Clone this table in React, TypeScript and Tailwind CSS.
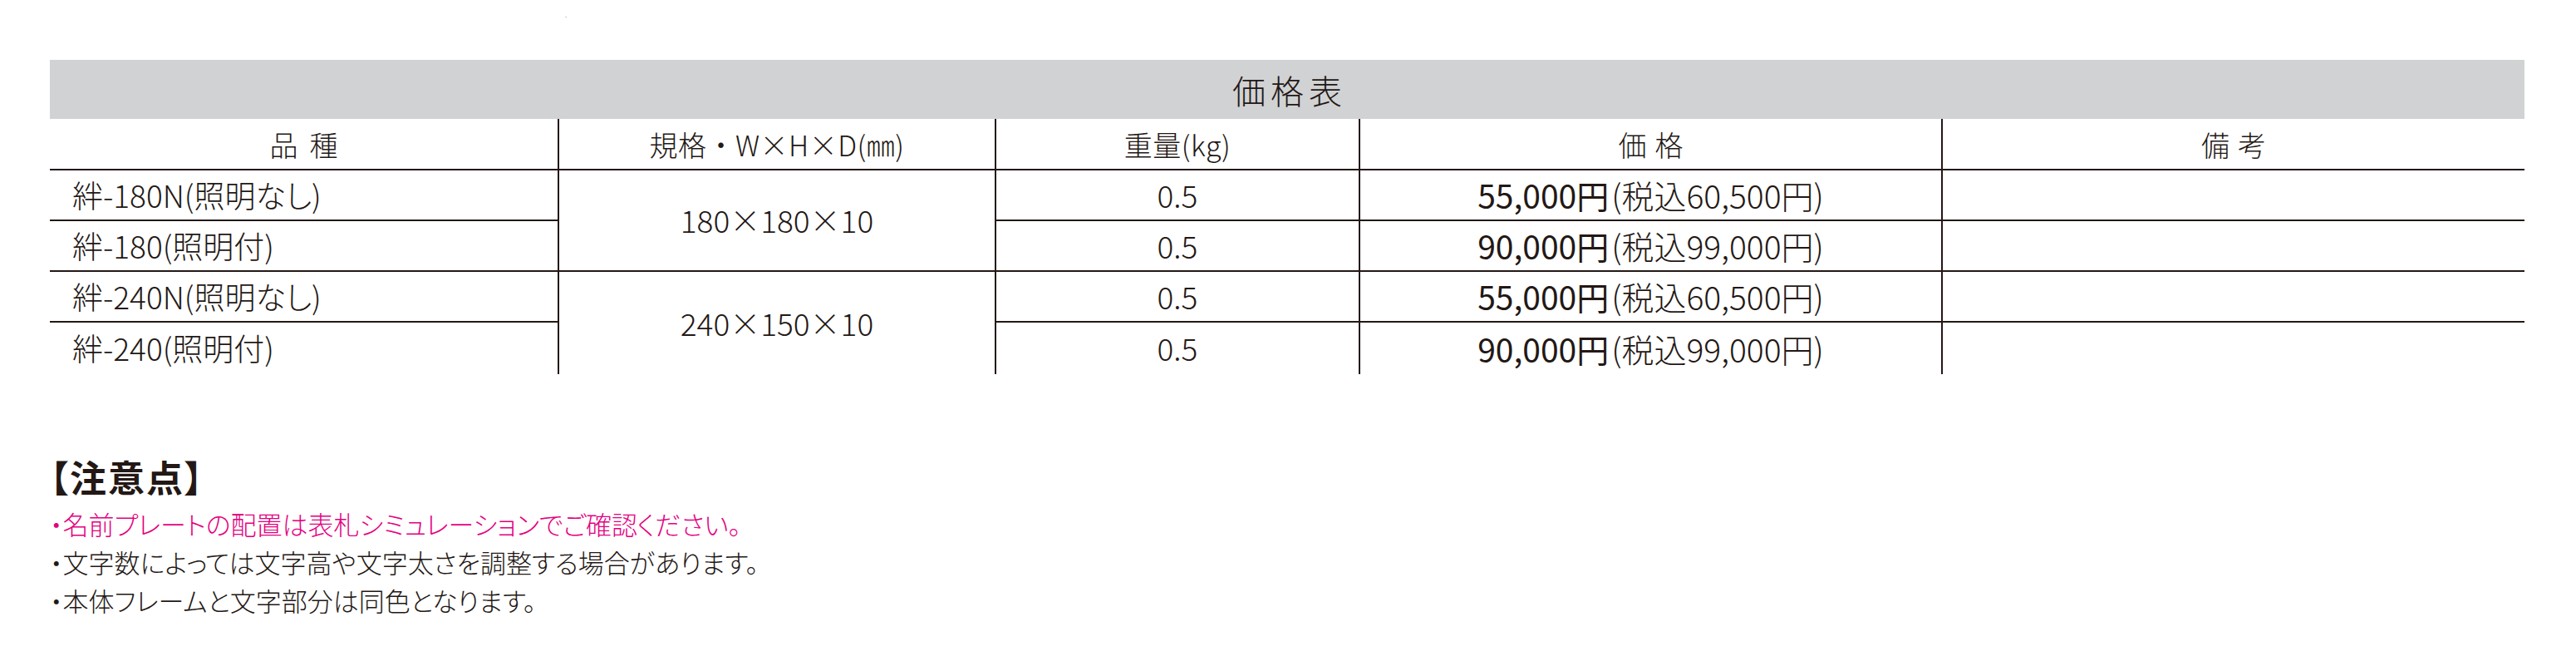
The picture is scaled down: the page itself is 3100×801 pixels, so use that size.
const rows = [
  { name: '絆-180N(照明なし)', spec: '180×180×10', weight: '0.5', price: '55,000円', tax: '(税込60,500円)' },
  { name: '絆-180(照明付)', spec: '', weight: '0.5', price: '90,000円', tax: '(税込99,000円)' },
  { name: '絆-240N(照明なし)', spec: '240×150×10', weight: '0.5', price: '55,000円', tax: '(税込60,500円)' },
  { name: '絆-240(照明付)', spec: '', weight: '0.5', price: '90,000円', tax: '(税込99,000円)' },
];

const headers = ['品種', '規格・W×H×D(㎜)', '重量(kg)', '価格', '備考'];

export default function App() {
  return (
    <div className="w-[3100px] h-[801px] bg-white text-[#231815] font-['Noto_Sans_CJK_JP','Noto_Sans',sans-serif]">
      {/* stray speck at the top */}
      <div className="h-[72px] pt-[20px]">
        <div className="ml-[680px] w-[2px] h-[1px] bg-[#c8c8c8]" />
      </div>

      {/* price table */}
      <div className="pl-[60px]">
        <div className="w-[2978px] h-[71px] bg-[#d1d2d4] flex items-center justify-center">
          <span className="text-[40px] font-light tracking-[6px] pl-[6px]">価格表</span>
        </div>

        <div className="grid grid-cols-[613px_526px_438px_701px_700px] grid-rows-[62px_61px_61px_61px_62px]">
          {headers.map((h, i) => (
            <div
              key={h}
              className={
                'flex items-center justify-center border-b-2 border-[#231815] text-[34px] font-light ' +
                (i < 4 ? 'border-r-2 ' : '') +
                (h.length === 2 ? (i === 0 ? 'tracking-[14px] pl-[14px]' : 'tracking-[10px] pl-[10px]') : 'tracking-[0.5px]')
              }
            >
              {h}
            </div>
          ))}

          {rows.map((r, i) => {
            const bottom = i < 3 ? 'border-b-2 ' : '';
            return [
              <div
                key={'n' + i}
                className={
                  "flex items-center pl-[27px] border-r-2 border-[#231815] text-[37px] font-light [font-feature-settings:'palt'] " +
                  bottom
                }
              >
                {r.name}
              </div>,
              r.spec ? (
                <div
                  key={'s' + i}
                  className={
                    'row-span-2 flex items-center justify-center border-r-2 border-[#231815] text-[37px] font-light ' +
                    (i === 0 ? 'border-b-2' : '')
                  }
                >
                  {r.spec}
                </div>
              ) : null,
              <div
                key={'w' + i}
                className={'flex items-center justify-center border-r-2 border-[#231815] text-[37px] font-light ' + bottom}
              >
                {r.weight}
              </div>,
              <div
                key={'p' + i}
                className={'flex items-center justify-center border-r-2 border-[#231815] text-[39px] ' + bottom}
              >
                <span className="font-normal">{r.price}</span>
                <span className="font-light ml-[3px]">{r.tax}</span>
              </div>,
              <div key={'b' + i} className={'border-[#231815] ' + bottom} />,
            ];
          })}
        </div>
      </div>

      {/* notes */}
      <div className="pl-[60px] mt-[101px] [font-feature-settings:'palt']">
        <div className="text-[44px] leading-[44px] font-bold tracking-[2px]">【注意点】</div>
        <div className="mt-[12px] text-[31px] leading-[46px] font-light">
          <p className="text-[#e4007f]">・名前プレートの配置は表札シミュレーションでご確認ください。</p>
          <p>・文字数によっては文字高や文字太さを調整する場合があります。</p>
          <p>・本体フレームと文字部分は同色となります。</p>
        </div>
      </div>
    </div>
  );
}
